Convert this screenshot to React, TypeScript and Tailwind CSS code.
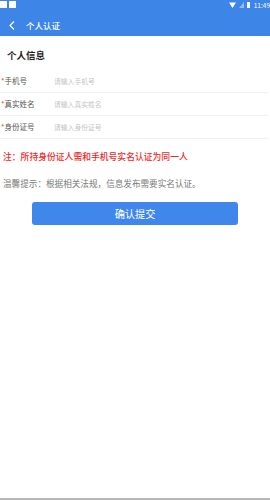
import React from 'react'

const fields = [
  { label: '手机号', placeholder: '请输入手机号' },
  { label: '真实姓名', placeholder: '请输入真实姓名' },
  { label: '身份证号', placeholder: '请输入身份证号' },
]

const StatusBar = () => (
  <div className="flex h-[14px] items-start justify-between pt-[1px]">
    <div className="flex gap-[2px]">
      <div className="h-[7px] w-[7px] bg-white" />
      <div className="h-[7px] w-[7px] bg-white" />
    </div>
    <div className="flex items-center gap-[3px] text-[6.5px] leading-[8px] text-white">
      <svg width="7" height="6" viewBox="0 0 7 6">
        <path d="M0 0.5 L7 0.5 L3.5 6 Z" fill="white" />
      </svg>
      <svg width="5" height="6" viewBox="0 0 5 6">
        <path d="M0 6 L5 0 L5 6 Z" fill="white" opacity="0.45" />
      </svg>
      <div className="h-[6px] w-[3px] bg-white" />
      <span className="ml-[1px]">11:49</span>
    </div>
  </div>
)

export default function App() {
  return (
    <div
      className="relative flex h-[500px] w-[270px] flex-col overflow-hidden bg-white"
      style={{ fontFamily: '"Noto Sans CJK SC", "Noto Sans", sans-serif' }}
    >
      <div className="bg-[#3d85e6]">
        <StatusBar />
        <div className="flex h-[22px] items-center text-white">
          <svg width="6" height="9" viewBox="0 0 6 9" className="ml-[9px]">
            <path d="M5 0.5 L1 4.5 L5 8.5" stroke="white" strokeWidth="1.2" fill="none" />
          </svg>
          <span className="ml-[11px] text-[8.5px] font-medium leading-[10px]">个人认证</span>
        </div>
      </div>

      <div className="px-[7px] pt-[14px] text-[9.5px] font-bold leading-[10px] text-[#222]">
        个人信息
      </div>

      <div className="mt-[10px] pr-[2px]">
        {fields.map((f) => (
          <div key={f.label} className="flex h-[23px] items-center border-b border-[#f1f1f1]">
            <span className="w-[54px] pl-[1px] text-[7.5px] text-[#555]">
              <span className="text-[#e53935]">*</span>
              {f.label}
            </span>
            <span className="text-[6.8px] text-[#c4c4c4]">{f.placeholder}</span>
          </div>
        ))}
      </div>

      <div className="mt-[12px] px-[3px] text-[8.8px] font-medium leading-[12px] text-[#f02828]">
        注：所持身份证人需和手机号实名认证为同一人
      </div>
      <div className="mt-[14px] px-[3px] text-[8.6px] leading-[12px] text-[#7a7a7a]">
        温馨提示：根据相关法规，信息发布需要实名认证。
      </div>

      <div className="mt-[13px] flex pl-[32px]">
        <div className="flex h-[23px] w-[206px] items-center justify-center rounded-[3px] bg-[#3f87ea] text-[10.2px] text-white">
          确认提交
        </div>
      </div>

      <div className="mt-auto h-[2px] bg-[#b8b8b8]" />
    </div>
  )
}
